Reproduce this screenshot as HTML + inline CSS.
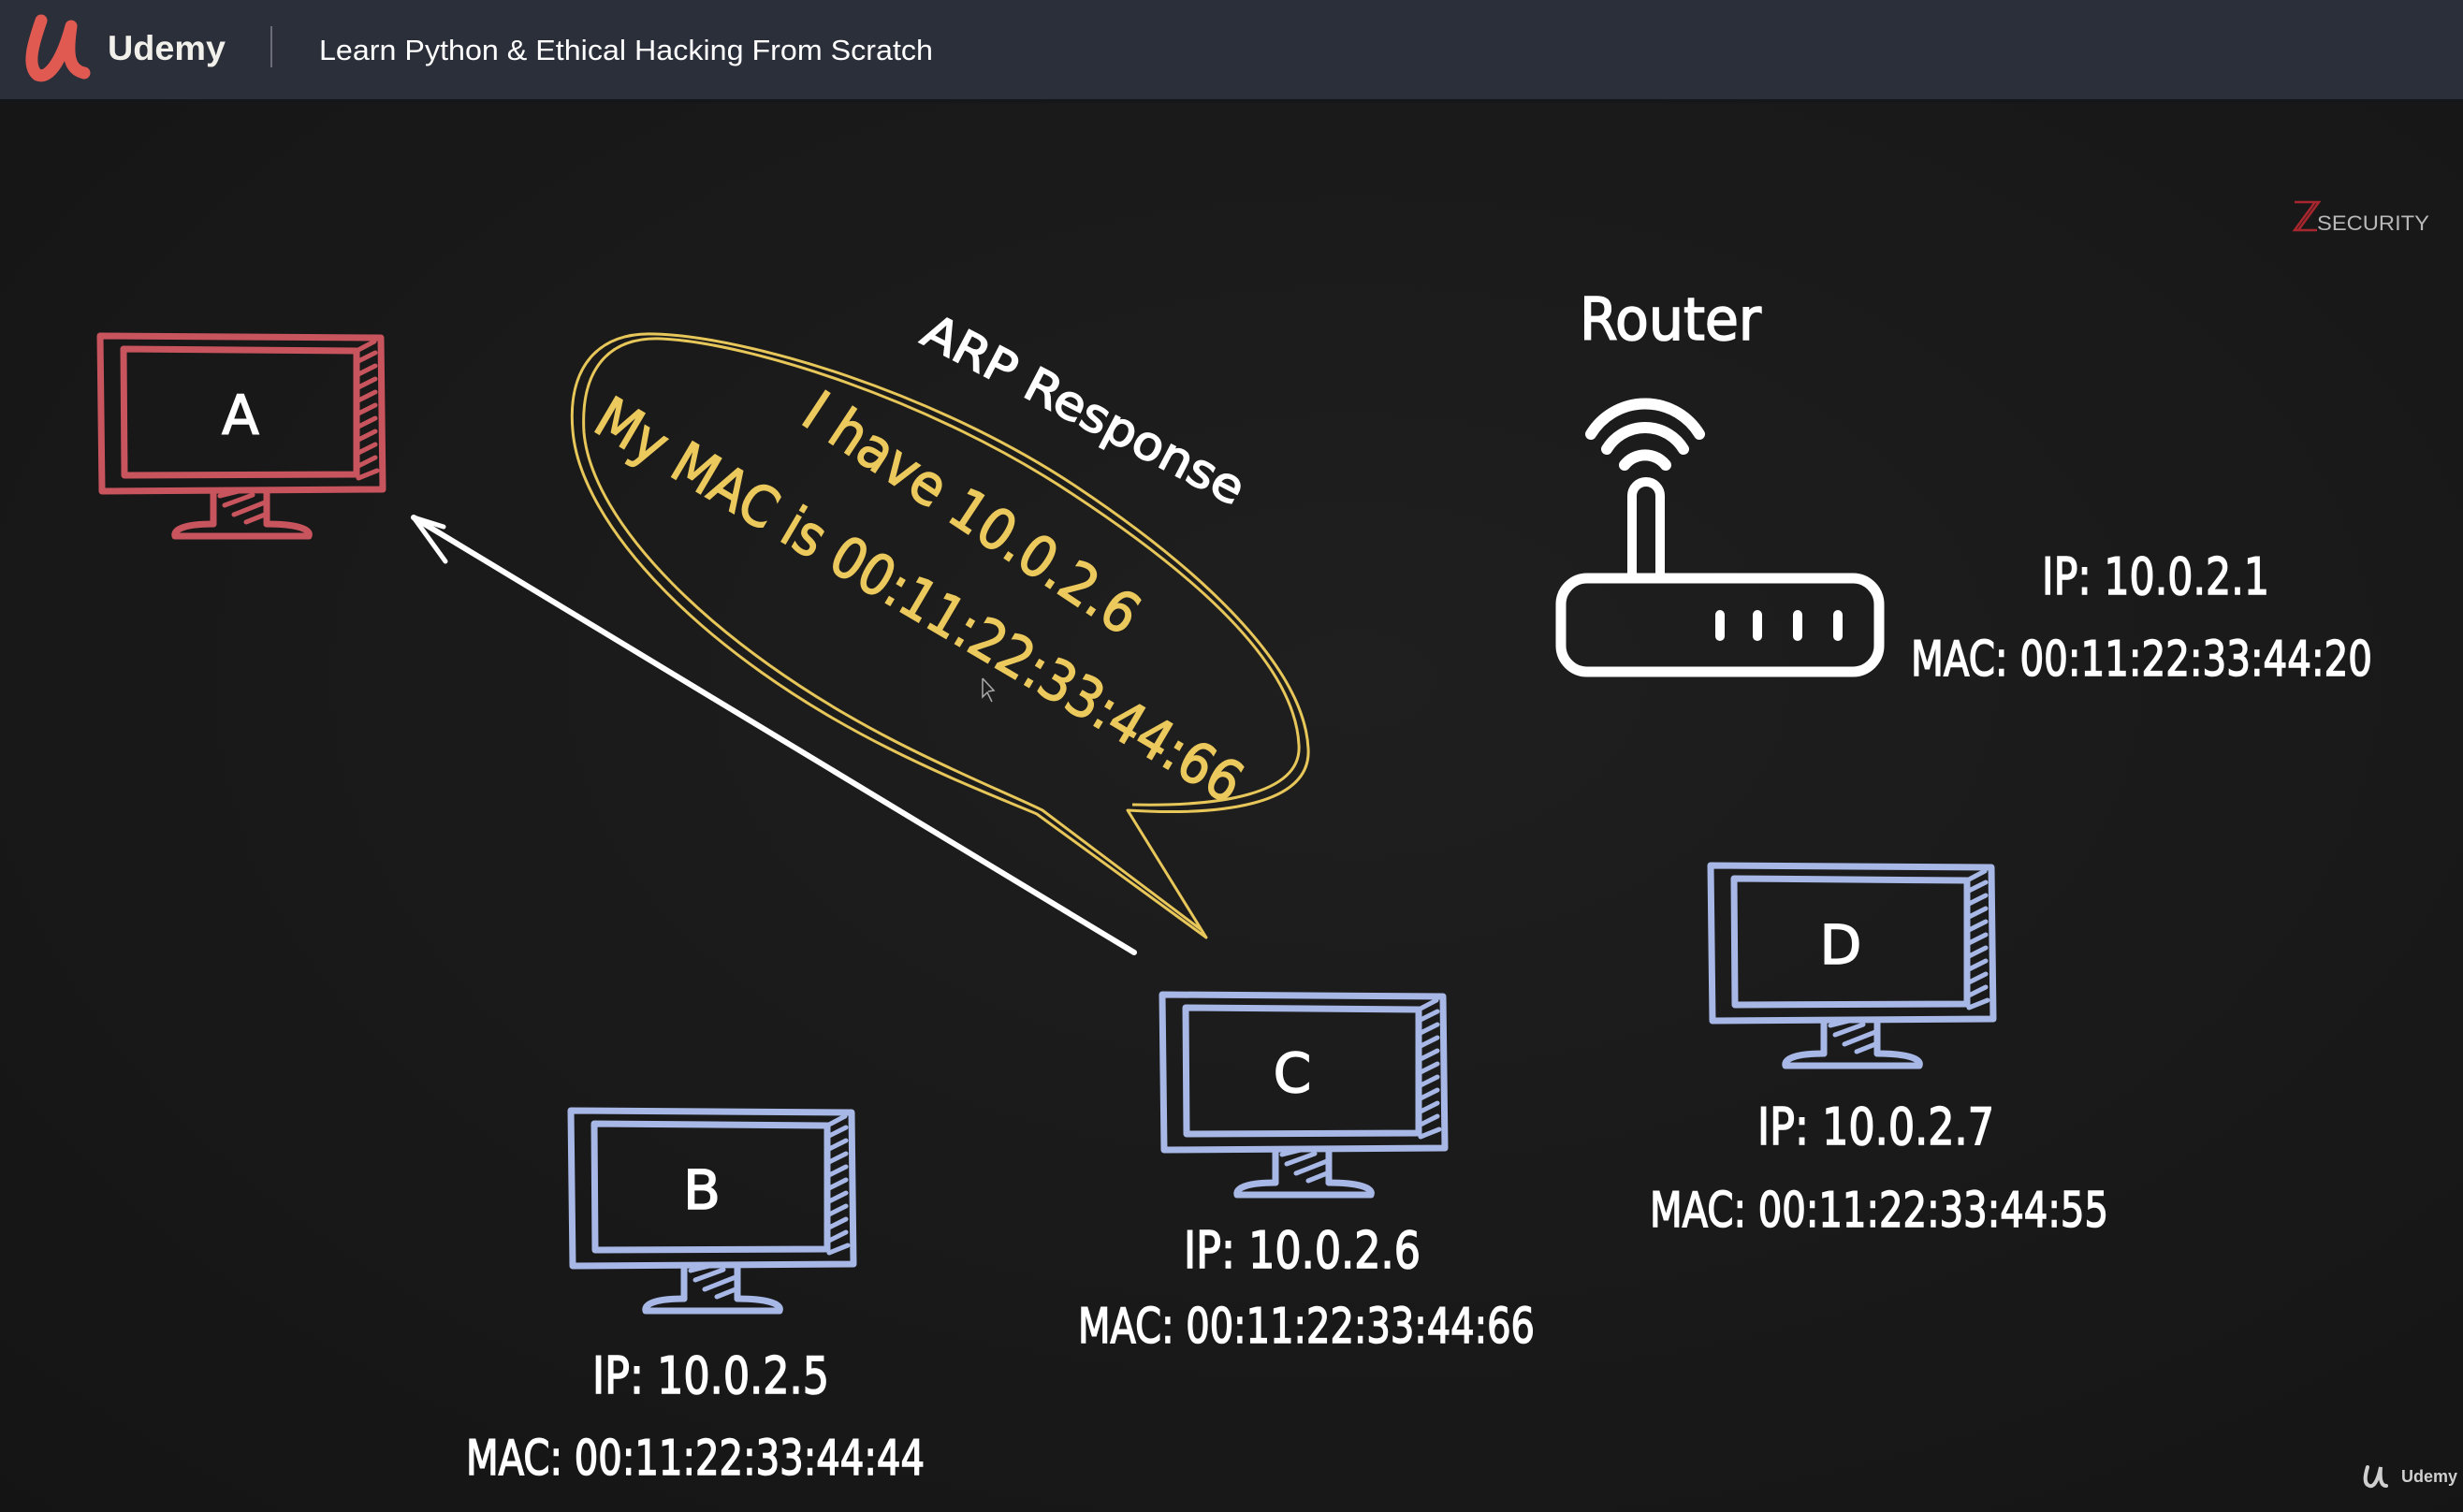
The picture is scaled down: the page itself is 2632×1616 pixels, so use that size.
<!DOCTYPE html>
<html><head><meta charset="utf-8"><style>
html,body{margin:0;padding:0;width:2632px;height:1616px;overflow:hidden;background:#1a1a1a}
svg{display:block}
</style></head><body>
<svg width="2632" height="1616" viewBox="0 0 2632 1616" xmlns="http://www.w3.org/2000/svg">
<defs>
<radialGradient id="bg" cx="0.55" cy="0.45" r="0.8">
<stop offset="0" stop-color="#1f1f1f"/><stop offset="1" stop-color="#141414"/>
</radialGradient>
<g id="mon" fill="none" stroke-width="7" stroke-linecap="round" stroke-linejoin="round">
<path d="M2,4 L302,6 L304,168 L4,170 Z"/>
<path d="M27,18 L276,20 L276,152 L28,153 Z"/>
<path d="M276,20 L295,10 M276,32 L296,22 M276,46 L296,36 M276,60 L296,50 M276,74 L296,64 M276,88 L296,78 M276,102 L296,92 M276,116 L296,106 M276,130 L296,120 M276,144 L296,134 M278,156 L298,148" stroke-width="5"/>
<path d="M123,170 L123,205 M180,170 L180,205"/>
<path d="M130,175 L150,170 M135,185 L165,174 M145,195 L178,182 M158,203 L178,195" stroke-width="5"/>
<path d="M123,205 C95,205 80,210 82,218 L225,218 C228,210 210,205 180,205"/>
</g>
</defs>
<rect width="2632" height="1616" fill="url(#bg)"/>
<!-- header -->
<rect width="2632" height="106" fill="#2b2f3a"/>
<rect y="106" width="2632" height="4" fill="#151619"/>
<path d="M44,22 C36,45 28,70 40,80 C54,86 68,58 76,28 C72,55 72,74 90,78" fill="none" stroke="#e05a52" stroke-width="13" stroke-linecap="round" stroke-linejoin="round"/>
<text x="115" y="64" font-family="Liberation Sans, sans-serif" font-weight="bold" font-size="37" fill="#f2f0ea" textLength="126" lengthAdjust="spacingAndGlyphs">Udemy</text>
<rect x="289" y="28" width="2" height="44" fill="#6b6e77"/>
<text x="341" y="64" font-family="Liberation Sans, sans-serif" font-size="31" fill="#ffffff" textLength="656" lengthAdjust="spacingAndGlyphs">Learn Python &amp; Ethical Hacking From Scratch</text>

<!-- ZSecurity -->
<path d="M2452,216 L2474,216 L2452,246 L2476,246 M2458,216 L2478,216 L2456,246" fill="none" stroke="#a8262e" stroke-width="2.5"/>
<text x="2476" y="246" font-family="Liberation Sans, sans-serif" font-size="22" fill="#b8b8b8" textLength="120" lengthAdjust="spacingAndGlyphs">SECURITY</text>
<!-- udemy watermark -->
<path d="M2530,1568 C2527,1578 2526,1586 2532,1588 C2538,1590 2542,1578 2544,1568 C2543,1580 2544,1588 2550,1588" fill="none" stroke="#cfcfcf" stroke-width="4" stroke-linecap="round"/>
<text x="2566" y="1584" font-family="Liberation Sans, sans-serif" font-weight="bold" font-size="18" fill="#cfcfcf">Udemy</text>

<!-- monitors -->
<g transform="translate(105,355)" stroke="#c8545e"><use href="#mon"/></g>
<text x="257" y="464" text-anchor="middle" font-family="DejaVu Sans, sans-serif" font-size="58" fill="#fff" stroke="#fff" stroke-width="1.5">A</text>
<g transform="translate(608,1183)" stroke="#a7b7e6"><use href="#mon"/></g>
<text x="750" y="1292" text-anchor="middle" font-family="DejaVu Sans, sans-serif" font-size="58" fill="#fff" stroke="#fff" stroke-width="1.5">B</text>
<g transform="translate(1240,1059)" stroke="#a7b7e6"><use href="#mon"/></g>
<text x="1381" y="1167" text-anchor="middle" font-family="DejaVu Sans, sans-serif" font-size="58" fill="#fff" stroke="#fff" stroke-width="1.5">C</text>
<g transform="translate(1826,921)" stroke="#a7b7e6"><use href="#mon"/></g>
<text x="1967" y="1030" text-anchor="middle" font-family="DejaVu Sans, sans-serif" font-size="58" fill="#fff" stroke="#fff" stroke-width="1.5">D</text>

<!-- labels -->
<g font-family="DejaVu Sans, sans-serif" fill="#ffffff" stroke="#ffffff" stroke-width="1.6" font-size="54">
<text x="633" y="1489" textLength="253" lengthAdjust="spacingAndGlyphs">IP: 10.0.2.5</text>
<text x="498" y="1576" textLength="490" lengthAdjust="spacingAndGlyphs" font-size="52">MAC: 00:11:22:33:44:44</text>
<text x="1265" y="1355" textLength="253" lengthAdjust="spacingAndGlyphs">IP: 10.0.2.6</text>
<text x="1152" y="1435" textLength="488" lengthAdjust="spacingAndGlyphs" font-size="52">MAC: 00:11:22:33:44:66</text>
<text x="1878" y="1223" textLength="253" lengthAdjust="spacingAndGlyphs">IP: 10.0.2.7</text>
<text x="1763" y="1311" textLength="490" lengthAdjust="spacingAndGlyphs" font-size="52">MAC: 00:11:22:33:44:55</text>
<text x="2182" y="635" textLength="243" lengthAdjust="spacingAndGlyphs">IP: 10.0.2.1</text>
<text x="2042" y="722" textLength="493" lengthAdjust="spacingAndGlyphs" font-size="52">MAC: 00:11:22:33:44:20</text>
<text x="1688" y="363" textLength="194" lengthAdjust="spacingAndGlyphs" font-size="62">Router</text>
</g>

<!-- router icon -->
<g fill="none" stroke="#fff" stroke-linecap="round">
<rect x="1668" y="618" width="340" height="100" rx="28" stroke-width="11"/>
<path d="M1744,612 L1744,530 A15,15 0 0 1 1774,530 L1774,612" stroke-width="10"/>
<path d="M1700,464 A68,68 0 0 1 1816,464" stroke-width="12"/>
<path d="M1717,480 A48,48 0 0 1 1799,480" stroke-width="12"/>
<path d="M1736,497 A28,28 0 0 1 1780,497" stroke-width="12"/>
<path d="M1838,657 L1838,680 M1878,657 L1878,680 M1921,657 L1921,680 M1964,657 L1964,680" stroke-width="10"/>
</g>

<!-- arrow -->
<g fill="none" stroke="#fff" stroke-linecap="round">
<path d="M1212,1018 L442,553" stroke-width="6"/>
<path d="M442,553 L476,600 M442,553 L474,563" stroke-width="5"/>
</g>

<!-- bubble -->
<g fill="none" stroke="#e8c75a" stroke-width="3" stroke-linejoin="round">
<path d="M1205,866 C1300,872 1402,862 1398,800 C1394,720 1300,620 1150,520 C1000,420 800,360 700,357 C640,354 606,392 612,460 C620,560 750,700 950,800 C1020,835 1080,858 1108,870 L1289,1002 Z"/>
<path d="M1210,860 C1300,862 1392,850 1388,796 C1384,716 1292,624 1146,528 C996,428 800,366 706,362 C650,360 620,395 624,462 C632,556 758,690 956,792 C1026,828 1086,852 1114,866 L1284,994"/>
</g>
<g font-family="DejaVu Sans, sans-serif" text-anchor="middle" dominant-baseline="central" stroke-width="1.6">
<text transform="translate(1038,549) rotate(33.5)" fill="#ecc95c" stroke="#ecc95c" font-size="60" textLength="416" lengthAdjust="spacingAndGlyphs">I have 10.0.2.6</text>
<text transform="translate(982,642) rotate(30.5)" fill="#ecc95c" stroke="#ecc95c" font-size="60" textLength="790" lengthAdjust="spacingAndGlyphs">My MAC is 00:11:22:33:44:66</text>
<text transform="translate(1158,438) rotate(27.5)" fill="#ffffff" stroke="#ffffff" font-size="50" textLength="380" lengthAdjust="spacingAndGlyphs">ARP Response</text>
</g>
<path d="M1050,725 L1050,745 L1055,740 L1060,750 M1050,725 L1062,738 L1056,739" fill="none" stroke="#aaa" stroke-width="1.5"/>
</svg>
</body></html>
